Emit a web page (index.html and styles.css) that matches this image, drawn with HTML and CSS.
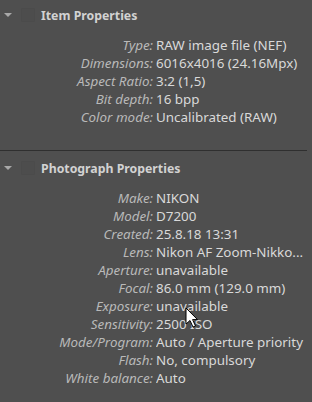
FILE: index.html
```html
<!DOCTYPE html>
<html>
<head>
    <meta charset="UTF-8">
    <meta name="viewport" content="width=device-width, initial-scale=1.0">
    <link rel="stylesheet" href="styles.css">
</head>
<body>
    <!-- Item Properties -->
    <div class="section first">
        <div class="header">
            <span class="arrow"></span>
            <span class="check"></span>
            <span class="title">Item Properties</span>
        </div>
        <div class="props">
            <div class="label">Type:</div><div class="value">RAW image file (NEF)</div>
            <div class="label">Dimensions:</div><div class="value">6016x4016 (24.16Mpx)</div>
            <div class="label">Aspect Ratio:</div><div class="value">3:2 (1,5)</div>
            <div class="label">Bit depth:</div><div class="value">16 bpp</div>
            <div class="label">Color mode:</div><div class="value">Uncalibrated (RAW)</div>
        </div>
    </div>

    <div class="separator"></div>

    <!-- Photograph Properties -->
    <div class="section">
        <div class="header">
            <span class="arrow"></span>
            <span class="check"></span>
            <span class="title">Photograph Properties</span>
        </div>
        <div class="props">
            <div class="label">Make:</div><div class="value">NIKON</div>
            <div class="label">Model:</div><div class="value">D7200</div>
            <div class="label">Created:</div><div class="value">25.8.18 13:31</div>
            <div class="label">Lens:</div><div class="value">Nikon AF Zoom-Nikko...</div>
            <div class="label">Aperture:</div><div class="value">unavailable</div>
            <div class="label">Focal:</div><div class="value">86.0 mm (129.0 mm)</div>
            <div class="label">Exposure:</div><div class="value">unavailable</div>
            <div class="label">Sensitivity:</div><div class="value">2500 ISO</div>
            <div class="label">Mode/Program:</div><div class="value">Auto / Aperture priority</div>
            <div class="label">Flash:</div><div class="value">No, compulsory</div>
            <div class="label">White balance:</div><div class="value">Auto</div>
        </div>
    </div>

    <!-- mouse pointer -->
    <svg class="cursor" width="14" height="22" viewBox="0 0 14 22">
        <path d="M1 1 L1 17 L5 13.5 L8 20 L10.5 19 L7.6 12.6 L12.5 12.6 Z" fill="#ffffff" stroke="#000000" stroke-width="1" stroke-linejoin="round"/>
    </svg>
</body>
</html>
```

FILE: styles.css
```css
body {
    margin: 0;
    padding: 0;
    background-color: #4f4f4f;
    font-family: 'Noto Sans', 'Open Sans', sans-serif;
    font-size: 13.4px;
    width: 312px;
    height: 402px;
    overflow: hidden;
    position: relative;
}
.section {
    width: 312px;
}
.section.first {
    padding-bottom: 24px;
}
.header {
    height: 30px;
    margin-top: 2px;
    display: flex;
    align-items: center;
}
.section.first .header {
    margin-top: 0;
}
.arrow {
    width: 0;
    height: 0;
    margin-left: 4px;
    border-left: 4px solid transparent;
    border-right: 4px solid transparent;
    border-top: 4px solid #a9a9a9;
}
.check {
    width: 12px;
    height: 12px;
    margin-left: 9px;
    border: 1px solid #4b4b4b;
    background-color: #4d4d4d;
    border-radius: 1px;
}
.title {
    margin-left: 6px;
    font-size: 12.3px;
    font-weight: bold;
    color: #d2d2d2;
}
.props {
    display: grid;
    grid-template-columns: 153px 1fr;
    column-gap: 3px;
    margin-top: 6px;
}
.label,
.value {
    height: 18px;
    line-height: 18px;
    white-space: nowrap;
    overflow: hidden;
}
.label {
    text-align: right;
    font-style: italic;
    color: #b9b9b9;
}
.value {
    color: #d9d9d9;
}
.separator {
    width: 307px;
    height: 1px;
    background-color: #2f2f2f;
}
.cursor {
    position: absolute;
    left: 185px;
    top: 307px;
}
```
